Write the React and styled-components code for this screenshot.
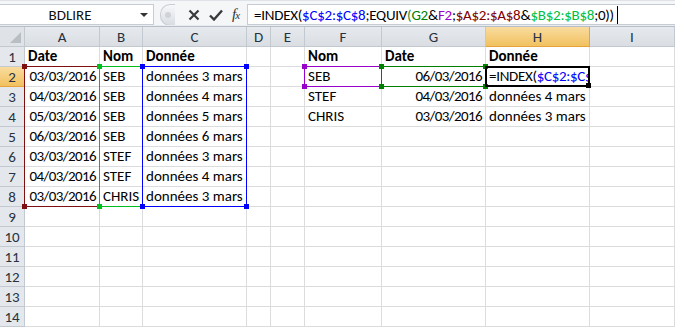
import React from "react";
import styled, { createGlobalStyle } from "styled-components";

const GlobalStyle = createGlobalStyle`
  html, body {
    margin: 0;
    padding: 0;
    background: #ffffff;
  }
  body {
    font-family: Carlito, Lato, "Liberation Sans", sans-serif;
  }
`;

const Window = styled.div`
  width: 675px;
  height: 327px;
  overflow: hidden;
  display: flex;
  flex-direction: column;
  background: #ffffff;
`;

const FormulaBar = styled.div`
  height: 25px;
  display: flex;
  align-items: stretch;
  background: #f4f6f8;
  padding-top: 3px;
  box-sizing: border-box;
  border-top: 1px solid #dfe3e8;
`;

const NameBox = styled.div`
  width: 154px;
  box-sizing: border-box;
  background: #ffffff;
  border: 1px solid #c6ccd3;
  border-left: none;
  display: flex;
  align-items: center;
  font-size: 15px;
  color: #111;
`;

const NameText = styled.span`
  flex: 1;
  text-align: center;
`;

const DropArrow = styled.span`
  width: 0;
  height: 0;
  border-left: 4px solid transparent;
  border-right: 4px solid transparent;
  border-top: 4px solid #333;
  margin-right: 5px;
`;

const ButtonZone = styled.div`
  width: 93px;
  display: flex;
  align-items: center;
  gap: 9px;
  padding-left: 6px;
  box-sizing: border-box;
`;

const Knob = styled.div`
  width: 14px;
  height: 20px;
  border-radius: 10px 0 0 10px;
  background: linear-gradient(#f6f7f9, #d9dde2);
  border: 1px solid #c9ced5;
  border-right: none;
  display: flex;
  align-items: center;
  justify-content: center;
  margin-right: 4px;
  &::after {
    content: "";
    width: 6px;
    height: 6px;
    border-radius: 3px;
    background: #cfd3d8;
  }
`;

const Fx = styled.span`
  font-family: "Liberation Serif", serif;
  font-style: italic;
  font-size: 15px;
  color: #333;
  letter-spacing: -1px;
  & small {
    font-size: 11px;
  }
`;

const FormulaInput = styled.div`
  flex: 1;
  background: #ffffff;
  border: 1px solid #c6ccd3;
  border-right: none;
  display: flex;
  align-items: center;
  padding-left: 6px;
  font-size: 15px;
  letter-spacing: -0.25px;
  color: #000;
  white-space: nowrap;
`;

const Ref = styled.span`
  color: ${(p) => p.$c};
`;

const Caret = styled.span`
  display: inline-block;
  width: 1px;
  height: 18px;
  background: #000;
  margin-left: 3px;
`;

const Strip = styled.div`
  height: 3px;
  background: #e9ecf0;
  border-bottom: 1px solid #b7bec7;
`;

const SheetWrap = styled.div`
  position: relative;
  flex: 1;
`;

const Sheet = styled.div`
  display: grid;
  grid-template-columns: 25px 75px 43px 104px 24px 34px 77px 104px 104px 1fr;
  grid-auto-rows: 20px;
  font-size: 15px;
`;

const Corner = styled.div`
  box-sizing: border-box;
  background: #dfe3e8;
  border-right: 1px solid #c3c9d1;
  border-bottom: 1px solid #c3c9d1;
  position: relative;
  &::after {
    content: "";
    position: absolute;
    right: 3px;
    bottom: 3px;
    width: 0;
    height: 0;
    border-left: 11px solid transparent;
    border-bottom: 11px solid #b9bec5;
  }
`;

const ColHead = styled.div`
  box-sizing: border-box;
  background: ${(p) =>
    p.$active ? "linear-gradient(#f9dc9f, #f1c15f)" : "linear-gradient(#e6e9ed, #dadee3)"};
  border-right: 1px solid ${(p) => (p.$active ? "#e6a23c" : "#c3c9d1")};
  border-bottom: 1px solid ${(p) => (p.$active ? "#e6a23c" : "#c3c9d1")};
  color: #27323f;
  display: flex;
  align-items: center;
  justify-content: center;
  font-size: 15px;
`;

const RowHead = styled.div`
  box-sizing: border-box;
  background: ${(p) =>
    p.$active ? "linear-gradient(#f9dc9f, #f1c15f)" : "#e4e7eb"};
  border-right: 1px solid ${(p) => (p.$active ? "#e6a23c" : "#c3c9d1")};
  border-bottom: 1px solid ${(p) => (p.$active ? "#e6a23c" : "#c3c9d1")};
  color: #27323f;
  display: flex;
  align-items: center;
  justify-content: center;
  font-size: 15px;
`;

const Cell = styled.div`
  box-sizing: border-box;
  border-right: 1px solid #dadcdd;
  border-bottom: 1px solid #dadcdd;
  padding: 0 3px 1px;
  display: flex;
  align-items: flex-end;
  justify-content: ${(p) => (p.$right ? "flex-end" : "flex-start")};
  font-weight: ${(p) => (p.$bold ? 700 : 400)};
  letter-spacing: ${(p) => (p.$num ? "-0.6px" : "0")};
  color: #000;
  white-space: nowrap;
  overflow: ${(p) => (p.$clip ? "hidden" : "visible")};
`;

const Range = styled.div`
  position: absolute;
  box-sizing: border-box;
  border: ${(p) => p.$w || 1}px solid ${(p) => p.$c};
  pointer-events: none;
`;

const Handle = styled.span`
  position: absolute;
  width: 5px;
  height: 5px;
  background: ${(p) => p.$c};
  ${(p) => (p.$top ? "top: -3px;" : "bottom: -3px;")}
  ${(p) => (p.$left ? "left: -3px;" : "right: -3px;")}
`;

const colEdges = [0, 25, 100, 143, 247, 271, 305, 382, 486, 590, 675];
const rowEdge = (r) => 20 * r - 1;

const rectFor = (c1, r1, c2, r2) => ({
  left: colEdges[c1] - 1,
  top: rowEdge(r1),
  width: colEdges[c2 + 1] - colEdges[c1] + 1,
  height: rowEdge(r2 + 1) - rowEdge(r1) + 1,
});

const columns = ["A", "B", "C", "D", "E", "F", "G", "H", "I"];

const dataRows = [
  ["03/03/2016", "SEB", "données 3 mars"],
  ["04/03/2016", "SEB", "données 4 mars"],
  ["05/03/2016", "SEB", "données 5 mars"],
  ["06/03/2016", "SEB", "données 6 mars"],
  ["03/03/2016", "STEF", "données 3 mars"],
  ["04/03/2016", "STEF", "données 4 mars"],
  ["03/03/2016", "CHRIS", "données 3 mars"],
];

const lookupRows = {
  2: ["SEB", "06/03/2016", "formula"],
  3: ["STEF", "04/03/2016", "données 4 mars"],
  4: ["CHRIS", "03/03/2016", "données 3 mars"],
};

const Formula = () => (
  <>
    =INDEX(<Ref $c="#0000ff">$C$2:$C$8</Ref>;EQUIV<Ref $c="#2e8b2e">(</Ref>
    <Ref $c="#008000">G2</Ref>&amp;<Ref $c="#9900cc">F2</Ref>;
    <Ref $c="#800000">$A$2:$A$8</Ref>&amp;<Ref $c="#00c040">$B$2:$B$8</Ref>;0))
  </>
);

const RangeBox = ({ c1, r1, c2, r2, color }) => (
  <Range $c={color} style={rectFor(c1, r1, c2, r2)}>
    <Handle $c={color} $top $left />
    <Handle $c={color} $top />
    <Handle $c={color} $left />
    <Handle $c={color} />
  </Range>
);

const App = () => {
  const rows = [];
  for (let r = 1; r <= 14; r++) {
    let vals = ["", "", "", "", "", "", "", "", ""];
    if (r === 1) {
      vals = ["Date", "Nom", "Donnée", "", "", "Nom", "Date", "Donnée", ""];
    } else if (r <= 8) {
      const d = dataRows[r - 2];
      vals = [d[0], d[1], d[2], "", "", "", "", "", ""];
      if (lookupRows[r]) {
        vals[5] = lookupRows[r][0];
        vals[6] = lookupRows[r][1];
        vals[7] = lookupRows[r][2];
      }
    }
    rows.push(
      <React.Fragment key={r}>
        <RowHead $active={r === 2}>{r}</RowHead>
        {vals.map((v, i) => {
          const isDate = r > 1 && (i === 0 || i === 6);
          return (
            <Cell
              key={i}
              $bold={r === 1}
              $right={isDate}
              $num={isDate}
              $clip={i === 7 && r === 2}
            >
              {v === "formula" ? (
                <span style={{ letterSpacing: "-0.3px" }}>
                  =INDEX(<Ref $c="#0000ff">$C$2:$C$</Ref>
                </span>
              ) : (
                v
              )}
            </Cell>
          );
        })}
      </React.Fragment>
    );
  }

  return (
    <Window>
      <GlobalStyle />
      <FormulaBar>
        <NameBox>
          <NameText>BDLIRE</NameText>
          <DropArrow />
        </NameBox>
        <ButtonZone>
          <Knob />
          <svg width="12" height="12" viewBox="0 0 12 12">
            <path d="M1.5 1.5 L10.5 10.5 M10.5 1.5 L1.5 10.5" stroke="#3a3a3a" strokeWidth="2.2" />
          </svg>
          <svg width="14" height="12" viewBox="0 0 14 12">
            <path d="M1 6.5 L5 10.5 L13 1.5" stroke="#3a3a3a" strokeWidth="2.4" fill="none" />
          </svg>
          <Fx>
            f<small>x</small>
          </Fx>
        </ButtonZone>
        <FormulaInput>
          <Formula />
          <Caret />
        </FormulaInput>
      </FormulaBar>
      <Strip />
      <SheetWrap>
        <Sheet>
          <Corner />
          {columns.map((c) => (
            <ColHead key={c} $active={c === "H"}>
              {c}
            </ColHead>
          ))}
          {rows}
        </Sheet>
        <RangeBox c1={1} r1={2} c2={1} r2={8} color="#7f1010" />
        <RangeBox c1={2} r1={2} c2={2} r2={8} color="#00c020" />
        <RangeBox c1={3} r1={2} c2={3} r2={8} color="#0000ff" />
        <RangeBox c1={6} r1={2} c2={6} r2={2} color="#9900cc" />
        <RangeBox c1={7} r1={2} c2={7} r2={2} color="#008000" />
        <Range $c="#000" $w={2} style={rectFor(8, 2, 8, 2)}>
          <Handle $c="#000" />
        </Range>
      </SheetWrap>
    </Window>
  );
};

export default App;
